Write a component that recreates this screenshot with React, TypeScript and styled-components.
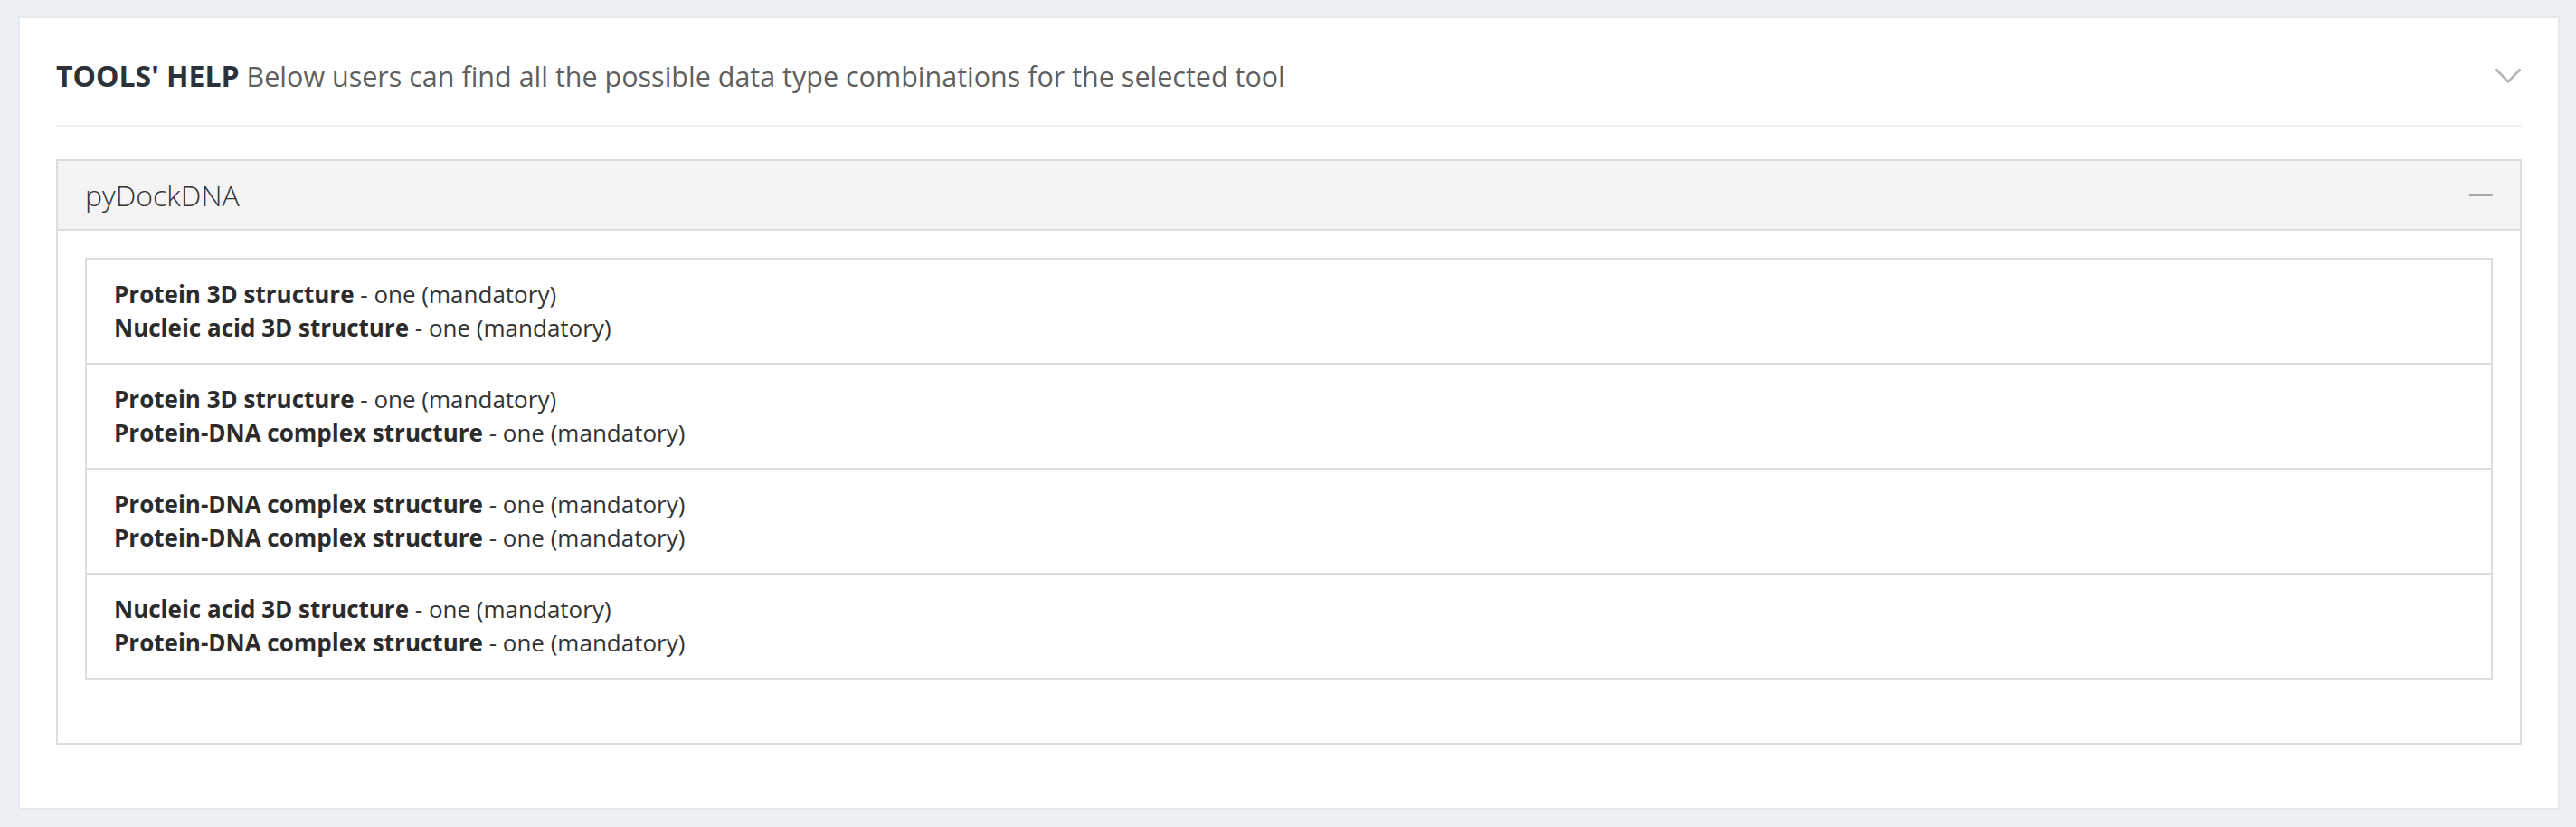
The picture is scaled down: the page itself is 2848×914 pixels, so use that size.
import React from "react";
import styled, { createGlobalStyle } from "styled-components";

const GlobalStyle = createGlobalStyle`
  html, body {
    margin: 0;
    padding: 0;
    background: #edf1f5;
  }
  body {
    font-family: "Open Sans", "Noto Sans", sans-serif;
    color: #333333;
  }
`;

const Page = styled.div`
  padding: 18px 18px 18px 20px;
  background: #edf1f5;
`;

const Card = styled.section`
  background: #ffffff;
  border: 2px solid #e5e9ee;
  padding: 38px 40px 70px 40px;
`;

const CardHeader = styled.header`
  display: flex;
  align-items: center;
  justify-content: space-between;
  height: 52px;
  padding-bottom: 28px;
  border-bottom: 2px solid #edf0f4;
  margin-bottom: 36px;
`;

const HeaderTitle = styled.h2`
  margin: 0;
  font-size: 30.5px;
  line-height: 52px;
  font-weight: 400;
  color: #5f5f5f;
  white-space: nowrap;
`;

const HeaderStrong = styled.strong`
  font-size: 32px;
  font-weight: 700;
  color: #2d3239;
`;

const ChevronButton = styled.span`
  display: flex;
  align-items: center;
  width: 30px;
  height: 20px;
`;

const Panel = styled.div`
  border: 2px solid #dddddd;
`;

const PanelHeading = styled.div`
  display: flex;
  align-items: center;
  justify-content: space-between;
  background: #f4f4f4;
  padding: 20px 30px;
  border-bottom: 2px solid #dddddd;
`;

const PanelTitle = styled.h3`
  margin: 0;
  font-size: 32px;
  line-height: 35px;
  font-weight: 300;
  color: #333333;
`;

const MinusIcon = styled.span`
  display: block;
  width: 26px;
  height: 3px;
  background: #a8a8a8;
`;

const PanelBody = styled.div`
  padding: 30px 30px 70px 30px;
`;

const List = styled.ul`
  list-style: none;
  margin: 0;
  padding: 0;
  border: 2px solid #dddddd;
`;

const ListItem = styled.li`
  padding: 20px 30px;
  font-size: 26px;
  line-height: 37px;
  color: #333333;
  & + & {
    border-top: 2px solid #dddddd;
  }
`;

const Line = styled.div``;

const DataType = styled.strong`
  font-weight: 700;
  color: #2b2b2b;
`;

const combos: string[][] = [
  ["Protein 3D structure", "Nucleic acid 3D structure"],
  ["Protein 3D structure", "Protein-DNA complex structure"],
  ["Protein-DNA complex structure", "Protein-DNA complex structure"],
  ["Nucleic acid 3D structure", "Protein-DNA complex structure"],
];

export default function App() {
  return (
    <>
      <GlobalStyle />
      <Page>
        <Card>
          <CardHeader>
            <HeaderTitle>
              <HeaderStrong>TOOLS' HELP</HeaderStrong> Below users can find all
              the possible data type combinations for the selected tool
            </HeaderTitle>
            <ChevronButton>
              <svg width="30" height="18" viewBox="0 0 30 18">
                <polyline
                  points="1.5,1.5 15,15.5 28.5,1.5"
                  fill="none"
                  stroke="#b3b3b3"
                  strokeWidth="2.6"
                />
              </svg>
            </ChevronButton>
          </CardHeader>
          <Panel>
            <PanelHeading>
              <PanelTitle>pyDockDNA</PanelTitle>
              <MinusIcon />
            </PanelHeading>
            <PanelBody>
              <List>
                {combos.map((c, i) => (
                  <ListItem key={i}>
                    {c.map((t, j) => (
                      <Line key={j}>
                        <DataType>{t}</DataType> - one (mandatory)
                      </Line>
                    ))}
                  </ListItem>
                ))}
              </List>
            </PanelBody>
          </Panel>
        </Card>
      </Page>
    </>
  );
}
